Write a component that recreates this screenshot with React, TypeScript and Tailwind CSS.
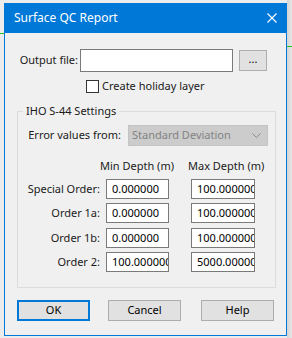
import React from "react";

const font = { fontFamily: '"Noto Sans", "Open Sans", sans-serif' };

function Field({ value, width }: { value: string; width: string }) {
  return (
    <div
      className={`h-[20px] ${width} overflow-hidden whitespace-nowrap border border-[#7a7a7a] bg-white pl-[5px] text-[11px] leading-[18px] text-black`}
    >
      {value}
    </div>
  );
}

function DepthRow({ label, min, max, className = "" }: { label: string; min: string; max: string; className?: string }) {
  return (
    <div className={`flex h-[20px] items-center ${className}`}>
      <span className="w-[82px] whitespace-nowrap text-right">{label}</span>
      <div className="ml-[6px]">
        <Field value={min} width="w-[63px]" />
      </div>
      <div className="ml-[22px]">
        <Field value={max} width="w-[64px]" />
      </div>
    </div>
  );
}

function Button({ label, focused = false }: { label: string; focused?: boolean }) {
  return (
    <button
      type="button"
      className={`flex h-[21px] w-[73px] items-center justify-center bg-[#e1e1e1] text-[11px] text-black ${
        focused ? "border-2 border-[#0078d7]" : "border border-[#adadad]"
      }`}
    >
      {label}
    </button>
  );
}

export default function App() {
  return (
    <div className="relative h-[338px] w-[292px] overflow-hidden bg-[#ececec] text-[11px] text-[#1a1a1a]" style={font}>
      <div className="absolute left-0 top-[33px] h-px w-[4px] bg-[#22c322]" />
      <div className="absolute right-0 top-[0px] h-full w-[5px] bg-gradient-to-r from-[#d4d4d4] to-[#e6e6e6]" />
      <div className="absolute right-0 top-[46px] h-px w-[5px] bg-[#22c322]" />

      <div className="relative ml-[4px] mt-[3px] flex h-[333px] w-[283px] flex-col border-x border-b border-[#0078d7] bg-[#f0f0f0]">
        <div className="-mx-px flex h-[30px] items-center justify-between bg-[#0078d7] pl-[10px] pr-[10px] text-white">
          <span className="text-[12px]">Surface QC Report</span>
          <svg width="10" height="10" viewBox="0 0 10 10">
            <path d="M0.5 0.5 L9.5 9.5 M9.5 0.5 L0.5 9.5" stroke="white" strokeWidth="1.1" />
          </svg>
        </div>

        <div className="mt-[16px] flex items-center">
          <span className="w-[73px] whitespace-nowrap text-right">Output file:</span>
          <div className="ml-[2px] h-[23px] w-[153px] border border-[#7a7a7a] bg-white" />
          <button
            type="button"
            className="ml-[6px] flex h-[21px] w-[28px] items-center justify-center border border-[#adadad] bg-[#e1e1e1] pb-[3px] text-[11px] text-black"
          >
            ...
          </button>
        </div>

        <div className="ml-[81px] mt-[8px] flex h-[13px] items-center">
          <div className="h-[13px] w-[13px] border border-[#333333] bg-white" />
          <span className="ml-[3px] whitespace-nowrap">Create holiday layer</span>
        </div>

        <div className="relative ml-[12px] mt-[18px] h-[177px] w-[259px] border border-[#dcdcdc]">
          <span className="absolute left-[5px] top-[-9px] whitespace-nowrap bg-[#f0f0f0] px-[3px]">IHO S-44 Settings</span>

          <div className="mt-[13px] flex items-center">
            <span className="w-[103px] whitespace-nowrap text-right">Error values from:</span>
            <div className="ml-[7px] flex h-[21px] w-[140px] items-center justify-between border border-[#c4c4c4] bg-[#cccccc] pl-[3px] pr-[6px] text-[#838383]">
              <span className="whitespace-nowrap">Standard Deviation</span>
              <svg width="9" height="5" viewBox="0 0 9 5">
                <path d="M0.5 0.5 L4.5 4.5 L8.5 0.5" stroke="#8a8a8a" strokeWidth="1" fill="none" />
              </svg>
            </div>
          </div>

          <div className="mt-[12px] flex h-[16px] items-center">
            <span className="ml-[82px] w-[88px] whitespace-nowrap">Min Depth (m)</span>
            <span className="whitespace-nowrap">Max Depth (m)</span>
          </div>

          <DepthRow className="mt-[5px]" label="Special Order:" min="0.000000" max="100.000000" />
          <DepthRow className="mt-[4px]" label="Order 1a:" min="0.000000" max="100.000000" />
          <DepthRow className="mt-[5px]" label="Order 1b:" min="0.000000" max="100.000000" />
          <DepthRow className="mt-[4px]" label="Order 2:" min="100.000000" max="5000.000000" />
        </div>

        <div className="ml-[12px] mt-[12px] flex">
          <Button label="OK" focused />
          <div className="ml-[18px]">
            <Button label="Cancel" />
          </div>
          <div className="ml-[20px]">
            <Button label="Help" />
          </div>
        </div>
      </div>
    </div>
  );
}
